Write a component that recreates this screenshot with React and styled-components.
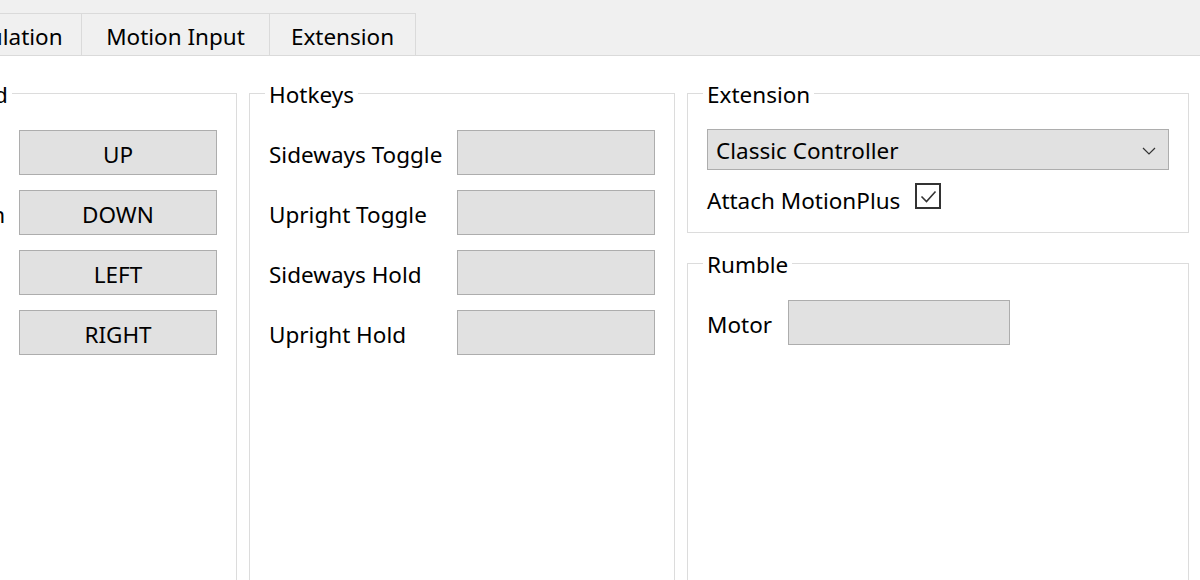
import React from "react";
import styled, { createGlobalStyle } from "styled-components";

const GlobalStyle = createGlobalStyle`
  html, body {
    margin: 0;
    padding: 0;
    background: #ffffff;
    overflow: hidden;
  }
  body {
    font-family: "Noto Sans", "Open Sans", "DejaVu Sans", sans-serif;
    color: #000;
  }
`;

const Window = styled.div`
  width: 1200px;
  height: 580px;
  overflow: hidden;
  display: flex;
  flex-direction: column;
  background: #fff;
`;

const TabStrip = styled.div`
  height: 55px;
  flex: none;
  display: flex;
  align-items: flex-end;
  background: #f0f0f0;
  border-bottom: 1px solid #dadada;
  margin-left: -151px;
`;

const Tab = styled.div`
  width: ${(p) => p.$w}px;
  height: 42px;
  box-sizing: border-box;
  border: 1px solid #dadada;
  border-bottom: none;
  margin-right: -1px;
  padding-top: 3px;
  background: #f0f0f0;
  display: flex;
  align-items: center;
  justify-content: center;
  font-size: 22.5px;
  white-space: nowrap;
`;

const Content = styled.div`
  display: flex;
  gap: 12px;
  padding-top: 21px;
  margin-left: -76px;
  height: 560px;
  flex: none;
`;

const Column = styled.div`
  display: flex;
  flex-direction: column;
  gap: 14px;
  width: ${(p) => p.$w}px;
  flex: none;
`;

const Group = styled.fieldset`
  margin: 0;
  min-width: 0;
  box-sizing: border-box;
  border: 1px solid #dcdcdc;
  padding: ${(p) => p.$pt || 21}px 19px ${(p) => p.$pb || 0}px;
  flex: ${(p) => (p.$grow ? 1 : "none")};

  legend {
    margin-left: -4px;
    padding: 4px 4px 0;
    font-size: 22.5px;
    line-height: 28px;
  }
`;

const Grid = styled.div`
  display: grid;
  grid-template-columns: minmax(0, 1fr) 198px;
  column-gap: 13px;
  row-gap: 15px;
  align-items: center;
`;

const Label = styled.span`
  font-size: 22.5px;
  white-space: nowrap;
  padding-top: 4px;
`;

const Field = styled.div`
  box-sizing: border-box;
  width: ${(p) => (p.$w ? `${p.$w}px` : "auto")};
  height: 45px;
  padding-top: 3px;
  background: #e1e1e1;
  border: 1px solid #adadad;
  display: flex;
  align-items: center;
  justify-content: center;
  font-size: 22.5px;
`;

const Combo = styled.div`
  box-sizing: border-box;
  height: 41px;
  background: #e1e1e1;
  border: 1px solid #adadad;
  display: flex;
  align-items: center;
  justify-content: space-between;
  padding: 2px 12px 0 8px;
  font-size: 22.5px;
`;

const CheckRow = styled.div`
  display: flex;
  align-items: center;
  gap: 15px;
  margin-top: 14px;
  height: 28px;
`;

const CheckBox = styled.div`
  box-sizing: border-box;
  width: 26px;
  height: 26px;
  border: 2px solid #333;
  background: #fff;
  display: flex;
  align-items: center;
  justify-content: center;
  margin-top: -4px;
`;

const MotorRow = styled.div`
  display: flex;
  align-items: center;
  gap: 16px;
`;

const Chevron = () => (
  <svg width="14" height="8" viewBox="0 0 14 8" fill="none">
    <path d="M1 1l6 6 6-6" stroke="#333" strokeWidth="1.2" />
  </svg>
);

const Check = () => (
  <svg width="17" height="13" viewBox="0 0 17 13" fill="none">
    <path d="M1.5 6.5l5 5 9-10" stroke="#333" strokeWidth="1.6" />
  </svg>
);

const dpad = ["Up", "Down", "Left", "Right"];
const hotkeys = ["Sideways Toggle", "Upright Toggle", "Sideways Hold", "Upright Hold"];

export default function App() {
  return (
    <>
      <GlobalStyle />
      <Window>
        <TabStrip>
          <Tab $w={233}>Motion Simulation</Tab>
          <Tab $w={189}>Motion Input</Tab>
          <Tab $w={147}>Extension</Tab>
        </TabStrip>
        <Content>
          <Column $w={313}>
            <Group $grow>
              <legend>D-Pad</legend>
              <Grid>
                {dpad.map((d) => (
                  <React.Fragment key={d}>
                    <Label>{d}</Label>
                    <Field>{d.toUpperCase()}</Field>
                  </React.Fragment>
                ))}
              </Grid>
            </Group>
          </Column>
          <Column $w={426}>
            <Group $grow>
              <legend>Hotkeys</legend>
              <Grid>
                {hotkeys.map((h) => (
                  <React.Fragment key={h}>
                    <Label>{h}</Label>
                    <Field />
                  </React.Fragment>
                ))}
              </Grid>
            </Group>
          </Column>
          <Column $w={502}>
            <Group $pt={20} $pb={20}>
              <legend>Extension</legend>
              <Combo>
                <span>Classic Controller</span>
                <Chevron />
              </Combo>
              <CheckRow>
                <Label>Attach MotionPlus</Label>
                <CheckBox>
                  <Check />
                </CheckBox>
              </CheckRow>
            </Group>
            <Group $grow>
              <legend>Rumble</legend>
              <MotorRow>
                <Label>Motor</Label>
                <Field $w={222} />
              </MotorRow>
            </Group>
          </Column>
        </Content>
      </Window>
    </>
  );
}
